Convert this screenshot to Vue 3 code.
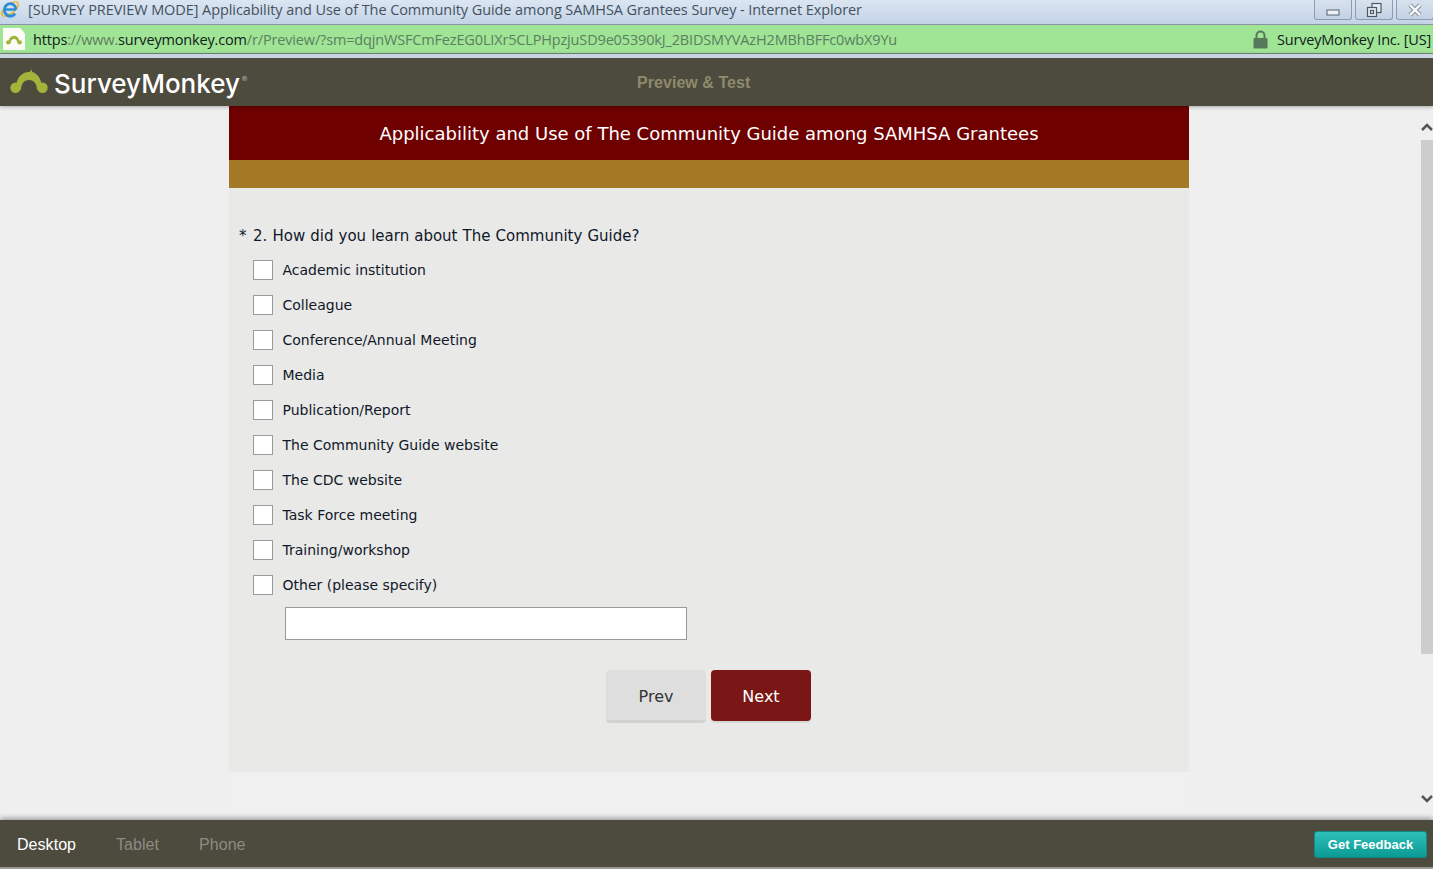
<template>
  <div class="window">
    <!-- Browser title bar -->
    <div class="titlebar">
      <svg class="ie-icon" width="20" height="20" viewBox="0 0 20 20">
        <ellipse cx="10" cy="10" rx="10" ry="4.500" transform="rotate(-38 10 10)" fill="none" stroke="#f3b21f" stroke-width="1.500" />
        <path d="M4.800 10.500H16" fill="none" stroke="#2a8fd8" stroke-width="2.400" />
        <path d="M16 10.500A5.800 6.300 0 1 0 15 14.500" fill="none" stroke="#2a8fd8" stroke-width="2.800" />
      </svg>
      <span class="title-text">[SURVEY PREVIEW MODE] Applicability and Use of The Community Guide among SAMHSA Grantees Survey - Internet Explorer</span>
      <div class="win-controls">
        <div class="win-btn">
          <svg width="14" height="14" viewBox="0 0 14 14"><rect x="1" y="7" width="12" height="5" fill="#eef2f7" stroke="#55606e" /></svg>
        </div>
        <div class="win-btn">
          <svg width="16" height="16" viewBox="0 0 16 16" fill="#e6ebf2" stroke="#4d5866" stroke-width="1.200"><rect x="6" y="1.500" width="9" height="9" /><rect x="1.500" y="5.500" width="9" height="9" /><rect x="4.500" y="8.500" width="3" height="3" /></svg>
        </div>
        <div class="win-btn">
          <svg width="14" height="14" viewBox="0 0 14 14"><path d="M2 2l10 10M12 2L2 12" stroke="#69737f" stroke-width="4.200" /><path d="M2 2l10 10M12 2L2 12" stroke="#f6f8fa" stroke-width="2.600" /></svg>
        </div>
      </div>
    </div>

    <!-- Address bar -->
    <div class="addressbar">
      <div class="page-icon">
        <svg width="16" height="11" viewBox="0 0 38 26">
          <circle cx="5.500" cy="19.700" r="5.200" fill="#a2b53a" />
          <circle cx="32.500" cy="19.700" r="5.200" fill="#a2b53a" />
          <path d="M6 20C6 10 12 4 19 4S32 10 32 20L27 22C27 16 24 12 19 12S11 16 11 22Z" fill="#a2b53a" />
        </svg>
      </div>
      <div class="url">
        <span class="dark">https</span>://www.<span class="dark">surveymonkey.com</span>/r/Preview/?sm=dqjnWSFCmFezEG0LIXr5CLPHpzjuSD9e05390kJ_2BIDSMYVAzH2MBhBFFc0wbX9Yu
      </div>
      <svg class="lock" width="15" height="19" viewBox="0 0 15 19">
        <path d="M3.500 9V5.500a4 4 0 0 1 8 0V9" fill="none" stroke="#55795a" stroke-width="2" />
        <rect x="0.500" y="8" width="14" height="10.500" rx="1" fill="#55795a" />
      </svg>
      <span class="cert">SurveyMonkey Inc. [US]</span>
    </div>

    <!-- SurveyMonkey header -->
    <header class="topbar">
      <div class="brand">
        <svg width="38" height="26" viewBox="0 0 38 26">
          <circle cx="5.500" cy="19.700" r="5.200" fill="#a2b53a" />
          <circle cx="32.500" cy="19.700" r="5.200" fill="#a2b53a" />
          <path d="M6 20C6 10 12 4 19 4c1 0 2-1 2.500-3.500 0 1 .2 2.500.5 3.500C27 5 32 11 32 20L27 22C27 16 24 12 19 12S11 16 11 22Z" fill="#a2b53a" />
        </svg>
        <span class="brand-name">SurveyMonkey</span><span class="reg">®</span>
      </div>
      <div class="mode">Preview &amp; Test</div>
    </header>

    <!-- Survey page -->
    <div class="viewport">
      <main class="scroller">
        <div class="survey">
          <div class="survey-title">Applicability and Use of The Community Guide among SAMHSA Grantees</div>
          <div class="survey-strip"></div>
          <form class="survey-body" @submit.prevent>
            <div class="question"><span class="star">*</span> 2. How did you learn about The Community Guide?</div>
            <label v-for="opt in options" :key="opt" class="option">
              <span class="box"></span>
              <span>{{ opt }}</span>
            </label>
            <input class="other" type="text" />
            <div class="actions">
              <button type="button" class="btn prev">Prev</button>
              <button type="button" class="btn next">Next</button>
            </div>
          </form>
          <div class="survey-tail"></div>
        </div>
      </main>
      <div class="scrollbar">
        <svg class="arrow up" width="12" height="9" viewBox="0 0 12 9"><path d="M1 7l5-5 5 5" fill="none" stroke="#555" stroke-width="2.500" /></svg>
        <div class="thumb"></div>
        <svg class="arrow down" width="12" height="9" viewBox="0 0 12 9"><path d="M1 2l5 5 5-5" fill="none" stroke="#555" stroke-width="2.500" /></svg>
      </div>
    </div>

    <!-- Device switcher -->
    <footer class="bottombar">
      <div class="devices">
        <span v-for="d in devices" :key="d" class="device" :class="{ active: d === 'Desktop' }">{{ d }}</span>
      </div>
      <button type="button" class="feedback">Get Feedback</button>
    </footer>
  </div>
</template>

<script setup>
const options = [
  'Academic institution',
  'Colleague',
  'Conference/Annual Meeting',
  'Media',
  'Publication/Report',
  'The Community Guide website',
  'The CDC website',
  'Task Force meeting',
  'Training/workshop',
  'Other (please specify)'
]

const devices = ['Desktop', 'Tablet', 'Phone']
</script>

<style>
html,
body {
  margin: 0;
  overflow: hidden;
}
</style>

<style scoped>
.window {
  width: 1433px;
  height: 869px;
  display: flex;
  flex-direction: column;
  overflow: hidden;
  background: #efefef;
  font-family: "DejaVu Sans", sans-serif;
}

.titlebar {
  height: 25px;
  box-sizing: border-box;
  display: flex;
  align-items: center;
  padding: 0 0 5px 0;
  flex-shrink: 0;
  background: linear-gradient(#dbe6f2, #c3d3e6);
  border-bottom: 1px solid #8a93a6;
}

.ie-icon {
  flex-shrink: 0;
  margin-top: -1px;
}

.title-text {
  margin-left: 8px;
  font-family: "Open Sans", sans-serif;
  font-size: 14.5px;
  color: #45515f;
  white-space: nowrap;
  letter-spacing: -0.08px;
}

.win-controls {
  margin-left: auto;
  align-self: flex-start;
  display: flex;
  gap: 3px;
  margin-right: -1px;
}

.win-btn {
  width: 38px;
  height: 20px;
  box-sizing: border-box;
  display: flex;
  align-items: center;
  justify-content: center;
  border: 1px solid #8b9cb4;
  border-top: none;
  border-radius: 0 0 3px 3px;
  background: linear-gradient(#d8e2ee, #c3d2e4);
}

.addressbar {
  height: 29px;
  box-sizing: border-box;
  display: flex;
  align-items: center;
  flex-shrink: 0;
  background: #a0e496;
  border-bottom: 1px solid #75887a;
  padding-left: 3px;
}

.page-icon {
  width: 22px;
  height: 22px;
  background: #fbfbf8;
  box-shadow: 0 0 1px #888;
  clip-path: polygon(0 0, 78% 0, 100% 24%, 100% 100%, 0 100%);
  display: flex;
  align-items: center;
  justify-content: center;
  flex-shrink: 0;
}

.url {
  margin-left: 8px;
  font-family: "Open Sans", sans-serif;
  font-size: 14.5px;
  color: #5c7f60;
  white-space: nowrap;
  letter-spacing: -0.16px;
}

.url .dark {
  color: #10201a;
}

.lock {
  margin-left: auto;
  flex-shrink: 0;
}

.cert {
  margin: 0 2px 0 9px;
  font-family: "Open Sans", sans-serif;
  font-size: 14.5px;
  color: #10201a;
  white-space: nowrap;
  letter-spacing: -0.2px;
}

.topbar {
  height: 52px;
  box-sizing: border-box;
  border-top: 4px solid #c8d4e0;
  flex-shrink: 0;
  display: flex;
  align-items: center;
  background: #4d4a3e;
  box-shadow: 0 1px 4px rgba(0, 0, 0, 0.3);
  position: relative;
  z-index: 2;
}

.brand {
  display: flex;
  align-items: center;
  width: 637px;
  padding-left: 10px;
  box-sizing: border-box;
  color: #fff;
}

.brand svg {
  margin-bottom: 3px;
}

.brand-name {
  margin-left: 6px;
  padding-top: 2px;
  font-family: "Inter", sans-serif;
  font-size: 26px;
  font-weight: 500;
}

.reg {
  font-size: 7px;
  align-self: flex-start;
  margin-top: 9px;
  margin-left: 1px;
  color: #bbb;
}

.mode {
  padding-top: 2px;
  font-family: "Liberation Sans", sans-serif;
  font-size: 16px;
  font-weight: 700;
  letter-spacing: 0.05px;
  color: #8d8b6b;
}

.viewport {
  flex: 1;
  min-height: 0;
  display: flex;
  background: #efefef;
}

.scroller {
  width: 1418px;
  display: flex;
  justify-content: center;
  overflow: hidden;
}

.survey {
  width: 960px;
  display: flex;
  flex-direction: column;
}

.survey-title {
  height: 54px;
  flex-shrink: 0;
  display: flex;
  align-items: center;
  justify-content: center;
  background: #6f0000;
  color: #fff;
  font-size: 18px;
}

.survey-strip {
  height: 28px;
  flex-shrink: 0;
  background: #a37926;
}

.survey-body {
  height: 584px;
  flex-shrink: 0;
  box-sizing: border-box;
  padding: 39px 0 0 10px;
  background: #e9e9e7;
  display: flex;
  flex-direction: column;
  color: #10182a;
}

.question {
  font-size: 15px;
  line-height: 18px;
  margin-bottom: 7px;
  word-spacing: 0.3px;
}

.star {
  margin-right: 1.500px;
}

.option {
  height: 35px;
  display: flex;
  align-items: center;
  padding-left: 14px;
  font-size: 14px;
}

.box {
  width: 18px;
  height: 18px;
  border: 1px solid #9b9b9b;
  background: #fff;
  margin-right: 9.500px;
  flex-shrink: 0;
}

.other {
  width: 402px;
  height: 33px;
  box-sizing: border-box;
  margin: 5px 0 0 46px;
  border: 1px solid #9b9b9b;
  background: #fff;
  padding: 0;
}

.actions {
  display: flex;
  align-items: flex-start;
  gap: 5px;
  margin: 30px 0 0 367px;
}

.btn {
  width: 100px;
  padding: 2px 0 0;
  border: none;
  border-radius: 4px;
  font-family: "DejaVu Sans", sans-serif;
  font-size: 16px;
  box-sizing: border-box;
}

.prev {
  height: 53px;
  padding-top: 3px;
  background: #dedede;
  color: #333;
  border-bottom: 3px solid #d2d2d0;
}

.next {
  height: 51px;
  background: #7a1616;
  color: #fff;
  box-shadow: 0 2px 0 #d8d8d6;
}

.survey-tail {
  flex: 1;
  background: #f0f0f0;
}

.scrollbar {
  flex: 1;
  position: relative;
  display: flex;
  flex-direction: column;
  align-items: flex-end;
  background: #efefef;
}

.arrow {
  flex-shrink: 0;
}

.arrow.up {
  margin-top: 17px;
}

.thumb {
  width: 12px;
  height: 514px;
  margin-top: 8px;
  background: #cdcdcd;
}

.arrow.down {
  margin-top: auto;
  margin-bottom: 13px;
}

.bottombar {
  height: 49px;
  box-sizing: border-box;
  margin-top: 4px;
  flex-shrink: 0;
  display: flex;
  align-items: center;
  justify-content: space-between;
  padding: 2px 6px 0 17px;
  background: #4d4a3e;
  border-bottom: 2px solid #9a9b92;
  box-shadow: 0 -2px 5px rgba(0, 0, 0, 0.35);
  font-family: "Liberation Sans", sans-serif;
  position: relative;
}

.devices {
  display: flex;
  gap: 40px;
  padding-top: 1px;
}

.device {
  font-size: 16px;
  letter-spacing: 0.05px;
  color: #8c8c84;
}

.device.active {
  color: #fff;
}

.feedback {
  width: 113px;
  height: 27px;
  padding: 0;
  border: 1px solid #128b86;
  border-radius: 3px;
  background: linear-gradient(#2ec0ba, #0b9a94);
  color: #fff;
  font-family: "Liberation Sans", sans-serif;
  font-size: 13px;
  font-weight: 700;
}
</style>
